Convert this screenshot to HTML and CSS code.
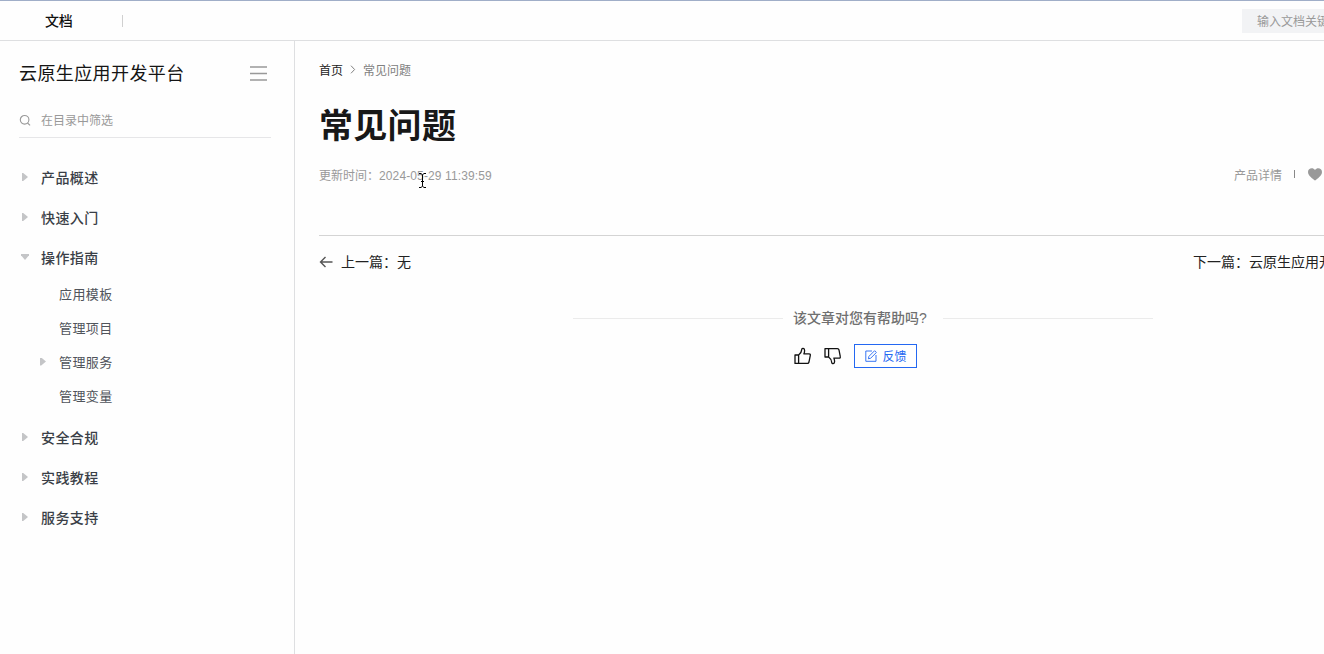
FILE: index.html
```html
<!DOCTYPE html>
<html lang="zh-CN">
<head>
<meta charset="UTF-8">
<meta name="viewport" content="width=device-width, initial-scale=1.0">
<title>常见问题</title>
<link rel="stylesheet" href="styles.css">
</head>
<body>

<header class="header">
    <a class="header-title">文档</a>
    <span class="header-line"></span>
    <div class="header-search">输入文档关键字</div>
</header>

<div class="container">
    <aside class="sidebar">
        <div class="sidebar-head">
            <h2>云原生应用开发平台</h2>
            <svg class="icon-menu" width="17" height="15" viewBox="0 0 17 15"><path d="M0 1h17M0 7.5h17M0 14h17" stroke="#999" stroke-width="1.5"/></svg>
        </div>
        <div class="filter">
            <svg width="12" height="12" viewBox="0 0 12 12" fill="none" stroke="#999" stroke-width="1.1"><circle cx="5.6" cy="5.8" r="4.3"/><path d="M8.5 9l2.6 2.3"/></svg>
            <span>在目录中筛选</span>
        </div>

        <ul class="menu">
            <li class="menu-item"><i class="arrow"></i>产品概述</li>
            <li class="menu-item"><i class="arrow"></i>快速入门</li>
            <li class="menu-item"><i class="arrow arrow-down"></i>操作指南</li>
            <li>
                <ul class="submenu">
                    <li class="submenu-item">应用模板</li>
                    <li class="submenu-item">管理项目</li>
                    <li class="submenu-item"><i class="arrow"></i>管理服务</li>
                    <li class="submenu-item">管理变量</li>
                </ul>
            </li>
            <li class="menu-item"><i class="arrow"></i>安全合规</li>
            <li class="menu-item"><i class="arrow"></i>实践教程</li>
            <li class="menu-item"><i class="arrow"></i>服务支持</li>
        </ul>
    </aside>

    <main class="main">
        <div class="article">
            <nav class="breadcrumb">
                <a>首页</a>
                <svg width="6" height="10" viewBox="0 0 6 10" fill="none" stroke="#808080"><path d="M1 1.7l3.6 3.8L1 9.3"/></svg>
                <span>常见问题</span>
            </nav>

            <h1>常见问题</h1>

            <div class="info">
                <span class="info-time">更新时间：<span class="info-date">2024-05-29 11:39:59</span></span>
                <div class="info-right">
                    <span>产品详情</span>
                    <i class="info-line"></i>
                    <svg width="14" height="13" viewBox="0 0 14 13"><path d="M7 12.5C5 10.8 0 7.7 0 3.9 0 .2 4.9-1 7 2c2.1-3 7-1.8 7 1.9 0 3.8-5 6.9-7 8.6z" fill="#999"/></svg>
                </div>
                <svg class="cursor" width="9" height="17" viewBox="0 0 9 17" fill="none" stroke="#000"><path d="M1 1.5h2l1.5 1.3L6 1.5h2M1 15.5h2l1.5-1.3L6 15.5h2M4.5 2.5v12M3 9.5h3"/></svg>
            </div>

            <div class="pager">
                <div class="pager-prev">
                    <svg width="14" height="12" viewBox="0 0 14 12" fill="none" stroke="#555" stroke-width="1.4"><path d="M13.5 6H1.5M6.5 1l-5 5 5 5"/></svg>
                    <span>上一篇：无</span>
                </div>
                <div class="pager-next">下一篇：云原生应用开发平台</div>
            </div>

            <section class="feedback">
                <div class="feedback-title"><span>该文章对您有帮助吗?</span></div>
                <div class="feedback-actions">
                    <svg class="thumb" width="18" height="18" viewBox="0 0 18 18"><path d="M1 8h3.6v8.4H1zM4.6 8C6.6 6.6 7.6 4.8 7.8 2.4c.1-1.5 2.8-1.6 2.8 1.1 0 1.2-.3 2.5-.7 3.3h5.2c1 0 1.4.7 1.2 1.5L15 15c-.2.9-.8 1.4-1.6 1.4H4.6"/></svg>
                    <svg class="thumb" width="18" height="18" viewBox="0 0 18 18"><path d="M1 1.6h3.6V10H1zM4.6 10c2 1.4 3 3.2 3.2 5.6.1 1.5 2.8 1.6 2.8-1.1 0-1.2-.3-2.5-.7-3.3h5.2c1 0 1.4-.7 1.2-1.5L15 3c-.2-.9-.8-1.4-1.6-1.4H4.6"/></svg>
                    <button class="btn-feedback">
                        <svg width="12" height="12" viewBox="0 0 12 12" fill="none" stroke="#2468f2" stroke-width=".9"><path d="M7 1H.8v10.3H11V5"/><path d="M3.4 8.8l.5-2.4L9.6.7l1.8 1.8-5.7 5.7z"/></svg>
                        <span>反馈</span>
                    </button>
                </div>
            </section>
        </div>
    </main>
</div>

</body>
</html>
```
FILE: styles.css
```css
* {
    box-sizing: border-box;
}

body {
    height: 654px;
    margin: 0;
    overflow: hidden;
    display: flex;
    flex-direction: column;
    font-family: "Liberation Sans", "Noto Sans CJK SC", sans-serif;
    font-size: 12px;
    color: #151b26;
    background-color: #fefefe;
    white-space: nowrap;
}

h1, h2, ul {
    margin: 0;
    padding: 0;
    list-style: none;
}

svg {
    display: block;
    flex: none;
}

/* header */
.header {
    flex: none;
    display: flex;
    align-items: center;
    height: 41px;
    padding-left: 45px;
    overflow: hidden;
    border-top: 1px solid #a0aec8;
    border-bottom: 1px solid #dedfe1;
}

.header-title {
    width: 77px;
    padding-bottom: 2px;
    font-size: 14px;
    font-weight: 500;
    letter-spacing: -0.3px;
    color: #111;
}

.header-line {
    width: 1px;
    height: 12px;
    background-color: #d0d0d0;
}

.header-search {
    flex: none;
    width: 200px;
    height: 24px;
    margin-left: auto;
    margin-right: -118px;
    padding-left: 15px;
    line-height: 26px;
    color: #999;
    background-color: #f2f3f5;
}

.container {
    flex: 1;
    display: flex;
    min-height: 0;
}

/* sidebar */
.sidebar {
    flex: none;
    width: 295px;
    padding: 17px 24px 0 19px;
    border-right: 1px solid #dedfe1;
}

.sidebar-head {
    display: flex;
    align-items: center;
    justify-content: space-between;
    height: 30px;
    padding-right: 3px;
}

.sidebar-head h2 {
    padding-bottom: 3px;
    font-size: 18px;
    font-weight: 400;
    letter-spacing: 0.4px;
    color: #151515;
}

.filter {
    display: flex;
    align-items: center;
    gap: 10px;
    height: 34px;
    margin-top: 16px;
    margin-right: -1px;
    padding-bottom: 1px;
    border-bottom: 1px solid #e6e6e8;
    color: #999;
}

.filter span {
    padding-bottom: 1px;
}

.menu {
    margin-top: 20px;
}

.menu-item {
    display: flex;
    align-items: center;
    height: 40px;
    padding: 0 0 2px 3px;
    font-size: 14px;
    font-weight: 500;
    letter-spacing: 0.4px;
    color: #3a3f47;
}

.arrow {
    width: 19px;
    height: 8px;
}

.arrow::before {
    content: "";
    display: block;
    width: 6px;
    height: 8px;
    background-color: #c4c5c7;
    clip-path: polygon(0 0, 20% 0, 100% 50%, 20% 100%, 0 100%);
}

.arrow-down::before {
    width: 8px;
    height: 6px;
    margin: 1px 0 0 -1px;
    clip-path: polygon(0 0, 100% 0, 100% 20%, 50% 100%, 0 20%);
}

.submenu {
    padding-bottom: 4px;
}

.submenu-item {
    display: flex;
    align-items: center;
    height: 34px;
    padding: 0 0 3px 40px;
    font-size: 13px;
    letter-spacing: 0.4px;
    color: #50545b;
}

.submenu-item .arrow {
    margin-left: -19px;
}

/* content */
.main {
    flex: 1;
    min-width: 0;
    padding: 19px 0 0 24px;
    overflow: hidden;
}

.article {
    width: 1088px;
}

.breadcrumb {
    display: flex;
    align-items: center;
    height: 20px;
    padding-bottom: 2px;
    color: #808080;
}

.breadcrumb a {
    color: #222;
}

.breadcrumb svg {
    margin: 0 7px;
}

h1 {
    margin-top: 21px;
    font-size: 34px;
    font-weight: 700;
    line-height: 50px;
    letter-spacing: 0.3px;
    color: #181818;
}

.info {
    position: relative;
    display: flex;
    align-items: center;
    justify-content: space-between;
    height: 20px;
    margin-top: 13px;
    color: #999;
}

.info-date {
    letter-spacing: 0.12px;
}

.info-right {
    display: flex;
    align-items: center;
    width: 173px;
}

.info-line {
    width: 1px;
    height: 8px;
    margin: 0 13px 0 12px;
    background-color: #888;
}

.cursor {
    position: absolute;
    left: 99px;
    top: 8px;
}

.pager {
    display: flex;
    justify-content: space-between;
    align-items: center;
    height: 52px;
    margin-top: 51px;
    border-top: 1px solid #d4d4d4;
    font-size: 14px;
    color: #222;
}

.pager-prev {
    display: flex;
    align-items: center;
    gap: 8px;
}

.pager-prev span,
.pager-next {
    padding-bottom: 2px;
}

.pager-next {
    width: 214px;
}

.feedback {
    width: 580px;
    margin: 20px auto 0;
}

.feedback-title {
    display: flex;
    align-items: center;
    gap: 10px;
    height: 22px;
    font-size: 14px;
    color: #707070;
}

.feedback-title span {
    padding: 0 6px 2px 0;
    font-weight: 500;
}

.feedback-title::before,
.feedback-title::after {
    content: "";
    flex: 1;
    height: 1px;
    background-color: #ebebeb;
}

.feedback-actions {
    display: flex;
    align-items: center;
    justify-content: center;
    margin-top: 15px;
    padding-right: 16px;
}

.thumb {
    margin-right: 12px;
    fill: none;
    stroke: #111;
    stroke-width: 1.3;
    stroke-linejoin: round;
}

.btn-feedback {
    display: flex;
    align-items: center;
    gap: 6px;
    width: 63px;
    height: 24px;
    padding: 0 0 0 10px;
    border: 1px solid #2468f2;
    background-color: #fff;
    font-family: inherit;
    font-size: 12px;
    color: #2468f2;
    cursor: pointer;
}

.btn-feedback span {
    padding-bottom: 1px;
}
```
